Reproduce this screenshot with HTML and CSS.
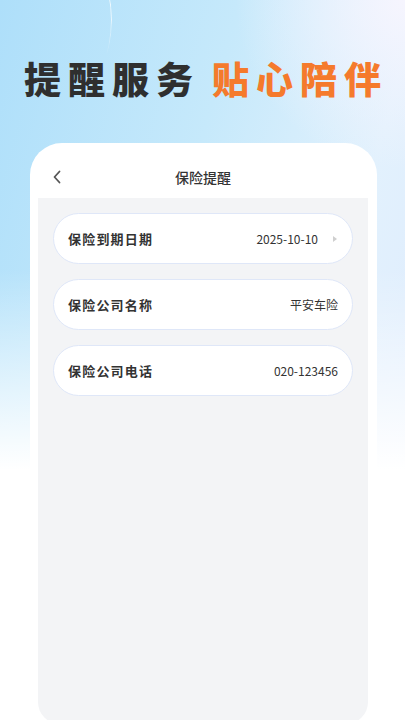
FILE: index.html
```html
<!DOCTYPE html>
<html lang="zh">
<head>
<meta charset="utf-8">
<meta name="viewport" content="width=405">
<title>保险提醒</title>
<link rel="stylesheet" href="styles.css">
</head>
<body>
<div class="screen">
  <div class="arc"></div>
  <header class="hero">
    <h1 class="headline"><span class="dark">提醒服务</span><span class="orange">贴心陪伴</span></h1>
  </header>
  <div class="phone">
    <div class="nav">
      <svg class="back" width="10" height="14" viewBox="0 0 10 14"><path d="M7.5 1.5 L2.5 7 L7.5 12.5" fill="none" stroke="#555" stroke-width="1.8" stroke-linecap="round" stroke-linejoin="round"/></svg>
      <div class="title">保险提醒</div>
    </div>
    <div class="panel">
      <div class="card">
        <span class="label">保险到期日期</span>
        <span class="value">2025-10-10<i class="tri"></i></span>
      </div>
      <div class="card">
        <span class="label">保险公司名称</span>
        <span class="value">平安车险</span>
      </div>
      <div class="card">
        <span class="label">保险公司电话</span>
        <span class="value">020-123456</span>
      </div>
    </div>
  </div>
</div>
</body>
</html>
```

FILE: styles.css
```css
html, body {
  margin: 0;
  padding: 0;
}
body {
  font-family: "Noto Sans CJK SC", "Noto Sans", sans-serif;
  color: #333;
}
.screen {
  position: relative;
  width: 405px;
  height: 720px;
  overflow: hidden;
  background:
    linear-gradient(to bottom, rgba(255,255,255,0) 0, rgba(255,255,255,0) 270px, #fff 470px),
    radial-gradient(circle at 100% 0%, #f6f5fe 0, rgba(246,245,254,0) 170px),
    radial-gradient(circle at 0% 100%, #f1eefd 0, rgba(241,238,253,0) 200px),
    linear-gradient(105deg, #aedffa 0%, #c6e9fb 40%, #e2f1fd 70%, #dde9fd 100%);
}
.arc {
  position: absolute;
  left: -148px;
  top: -110px;
  width: 258px;
  height: 258px;
  border-radius: 50%;
  border: 1.5px solid rgba(255,255,255,0.8);
  -webkit-mask-image: linear-gradient(to bottom, #000 0, #000 125px, transparent 165px);
  mask-image: linear-gradient(to bottom, #000 0, #000 125px, transparent 165px);
}
.hero {
  height: 143px;
  display: flex;
  align-items: flex-start;
  justify-content: center;
}
.headline {
  margin: 55px 0 0 0;
  font-size: 37px;
  line-height: 46px;
  font-weight: 900;
  letter-spacing: 7px;
  display: flex;
  gap: 12px;
  padding-left: 7px;
}
.dark { color: #2f2f2f; }
.orange { color: #f57a2c; }
.phone {
  margin: 0 28px 0 30px;
  height: 600px;
  background: #fff;
  border-radius: 32px 32px 0 0;
  padding: 0 9px 0 8px;
}
.nav {
  height: 55px;
  position: relative;
  display: flex;
  align-items: center;
  justify-content: center;
}
.back {
  position: absolute;
  left: 14px;
  top: 27px;
}
.title {
  font-size: 14px;
  font-weight: 500;
  color: #333;
  margin-top: 12px;
}
.panel {
  box-sizing: border-box;
  background: #f3f4f6;
  height: 526px;
  border-radius: 0 0 22px 22px;
  padding: 15px 15px 0 15px;
  display: flex;
  flex-direction: column;
  gap: 15px;
}
.card {
  height: 51px;
  box-sizing: border-box;
  flex: none;
  background: #fff;
  border: 1px solid #dfe7f8;
  border-radius: 26px;
  display: flex;
  align-items: center;
  justify-content: space-between;
  padding: 0 14px 0 14px;
}
.label {
  font-size: 13px;
  font-weight: 700;
  letter-spacing: 1.2px;
  color: #333;
}
.value {
  font-size: 12px;
  color: #333;
  display: flex;
  align-items: center;
}
.tri {
  display: inline-block;
  width: 0;
  height: 0;
  border-top: 3.5px solid transparent;
  border-bottom: 3.5px solid transparent;
  border-left: 4px solid #cfcfcf;
  margin-left: 15px;
  margin-right: 1px;
}
```
